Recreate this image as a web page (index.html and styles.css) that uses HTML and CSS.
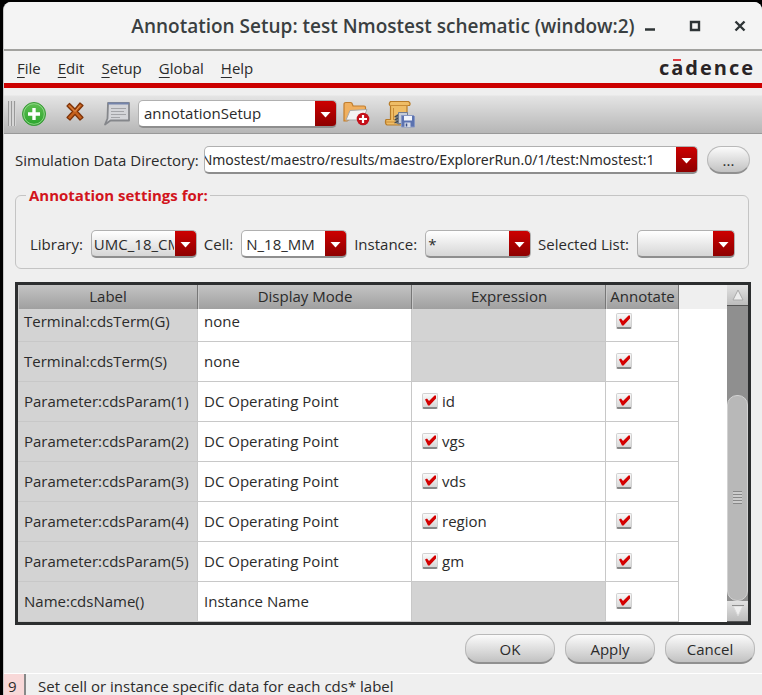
FILE: index.html
```html
<!DOCTYPE html>
<html lang="en">
<head>
<meta charset="utf-8">
<title>Annotation Setup</title>
<link rel="stylesheet" href="styles.css">
</head>
<body>
<div class="window">
  <header class="titlebar">
    <h1 class="title">Annotation Setup: test Nmostest schematic (window:2)</h1>
    <div class="window-buttons">
      <button type="button" aria-label="Minimize"><svg width="12" height="12" viewBox="0 0 12 12"><path d="M1 9.5h10" stroke="#2e3436" stroke-width="2.4"/></svg></button>
      <button type="button" aria-label="Maximize"><svg width="12" height="12" viewBox="0 0 12 12"><path d="M2 2h8v8H2z" fill="none" stroke="#2e3436" stroke-width="2.4"/></svg></button>
      <button type="button" aria-label="Close"><svg width="12" height="12" viewBox="0 0 12 12"><path d="M1.5 1.5l9 9M10.500 1.500l-9 9" stroke="#2e3436" stroke-width="2.400"/></svg></button>
    </div>
  </header>

  <nav class="menubar">
    <div class="menus">
      <button type="button"><u>F</u>ile</button>
      <button type="button"><u>E</u>dit</button>
      <button type="button"><u>S</u>etup</button>
      <button type="button"><u>G</u>lobal</button>
      <button type="button"><u>H</u>elp</button>
    </div>
    <div class="brand">c<span class="brand-a">a</span>dence</div>
  </nav>

  <div class="toolbar">
    <span class="grip"></span>
    <button type="button" class="tool" aria-label="Add">
      <svg width="26" height="28" viewBox="0 0 26 28">
        <defs><linearGradient id="green" x1="0" y1="0" x2="0" y2="1"><stop offset="0" stop-color="#5fbf52"/><stop offset="1" stop-color="#2aa52c"/></linearGradient></defs>
        <circle cx="13" cy="14" r="11.500" fill="url(#green)" stroke="#3b9a3a"/>
        <circle cx="13" cy="14" r="10.300" fill="none" stroke="#8fd488" stroke-width="1"/>
        <path d="M13 8v12M7 14h12" stroke="#fff" stroke-width="3.400"/>
      </svg>
    </button>
    <button type="button" class="tool tool-delete" aria-label="Delete">
      <svg width="20" height="28" viewBox="0 0 20 28">
        <path d="M2 6l2.500-2.500L10 9l5-6 3 2.500-5.500 6 5.500 6-3 2.500-5-5.500-5 5.500-3-2.500 5.500-6z" fill="#c4601c" stroke="#7d3208" stroke-width="1.200" stroke-linejoin="round"/>
        <path d="M4 5.500l6 6 5-6" fill="none" stroke="#e39455"/>
      </svg>
    </button>
    <button type="button" class="tool" aria-label="Comment">
      <svg width="28" height="28" viewBox="0 0 28 28">
        <path d="M5 3h21v17.500H7.500L2 24.500l2.500-6z" fill="#d4d5d9" stroke="#85878b" stroke-width="1.800" stroke-linejoin="round"/>
        <path d="M5 3.500h21" stroke="#7484ab" stroke-width="2"/>
        <path d="M8 8.500h15M8 11.500h13M8 14.500h15M8 17.500h9" stroke="#a3a4a8" stroke-width="1.200"/>
      </svg>
    </button>
    <select class="combo combo-white combo-setup" aria-label="Annotation setup"><option>annotationSetup</option></select>
    <button type="button" class="tool tool-folder" aria-label="Open folder">
      <svg width="28" height="28" viewBox="0 0 28 28">
        <path d="M2 21V4.500q0-2 2-2h4.500q1.500 0 2 2l.5 1.500h11q1.500 0 1.500 1.500V11L5 21z" fill="#f0b060" stroke="#c17d2c" stroke-width="1.200"/>
        <path d="M4 20l4-9.500 17-1-4.500 10.500z" fill="#f3f3f3" stroke="#a8a8a8"/>
        <circle cx="21" cy="19" r="6.300" fill="#c4101a"/>
        <path d="M21 15v8M17 19h8" stroke="#fff" stroke-width="2.200"/>
      </svg>
    </button>
    <button type="button" class="tool tool-script" aria-label="Save script">
      <svg width="32" height="28" viewBox="0 0 32 28">
        <path d="M6.500 1.500h18q2.500 1.500 1 4h-2.500V25H3Q.5 23.500 2 19.500h4.500V6Q4 4 6.500 1.500z" fill="#efbd66" stroke="#b87c28" stroke-width="1.200" stroke-linejoin="round"/>
        <path d="M7 5.500h17M9.500 8v12M2 22h9" fill="none" stroke="#c98c37"/>
        <path d="M14.500 13.500l-3 2v7.500l4 2z" fill="#6d7884"/>
        <path d="M10.500 17l4-2M10.500 20l4-2M10.500 23l4-2" stroke="#40464c" stroke-width="1.200"/>
        <path d="M14.500 12.500h9v11h-9z" fill="#c5ccd8" stroke="#6f7b91"/>
        <path d="M17.500 15.500h12l1 1v10.500h-13z" fill="#5c73b0" stroke="#8797c2"/>
        <path d="M20 16h8v4.500h-8z" fill="#f2f5fb"/>
        <path d="M20.500 22.500h6V27h-6z" fill="#d5dbe8"/><path d="M22.500 23.500v3" stroke="#3b4e85" stroke-width="1.500"/>
      </svg>
    </button>
  </div>

  <main class="content">
    <div class="directory">
      <label for="dir">Simulation Data Directory:</label>
      <input id="dir" class="combo combo-white combo-path" type="text" value="Nmostest/maestro/results/maestro/ExplorerRun.0/1/test:Nmostest:1">
      <button type="button" class="push push-browse" aria-label="Browse">...</button>
    </div>

    <fieldset class="group">
      <legend>Annotation settings for:</legend>
      <div class="filters">
        <label for="library">Library:</label>
        <select id="library" class="combo"><option>UMC_18_CMOS</option></select>
        <label for="cell">Cell:</label>
        <select id="cell" class="combo combo-white"><option>N_18_MM</option></select>
        <label for="instance">Instance:</label>
        <select id="instance" class="combo"><option>*</option></select>
        <label for="list">Selected List:</label>
        <select id="list" class="combo combo-list"><option></option></select>
      </div>
    </fieldset>

    <div class="grid-frame">
      <table class="grid">
        <colgroup><col class="col-label"><col class="col-mode"><col class="col-expr"><col class="col-annotate"><col></colgroup>
        <thead>
          <tr><th>Label</th><th>Display Mode</th><th>Expression</th><th>Annotate</th><td class="filler"></td></tr>
        </thead>
        <tbody>
          <tr class="row-cut"><th>Terminal:cdsTerm(G)</th><td>none</td><td class="empty"></td><td class="annotate"><input type="checkbox" checked aria-label="Annotate cdsTerm(G)"></td><td class="filler"></td></tr>
          <tr><th>Terminal:cdsTerm(S)</th><td>none</td><td class="empty"></td><td class="annotate"><input type="checkbox" checked aria-label="Annotate cdsTerm(S)"></td><td class="filler"></td></tr>
          <tr><th>Parameter:cdsParam(1)</th><td>DC Operating Point</td><td class="expr"><label><input type="checkbox" checked>id</label></td><td class="annotate"><input type="checkbox" checked aria-label="Annotate cdsParam(1)"></td><td class="filler"></td></tr>
          <tr><th>Parameter:cdsParam(2)</th><td>DC Operating Point</td><td class="expr"><label><input type="checkbox" checked>vgs</label></td><td class="annotate"><input type="checkbox" checked aria-label="Annotate cdsParam(2)"></td><td class="filler"></td></tr>
          <tr><th>Parameter:cdsParam(3)</th><td>DC Operating Point</td><td class="expr"><label><input type="checkbox" checked>vds</label></td><td class="annotate"><input type="checkbox" checked aria-label="Annotate cdsParam(3)"></td><td class="filler"></td></tr>
          <tr><th>Parameter:cdsParam(4)</th><td>DC Operating Point</td><td class="expr"><label><input type="checkbox" checked>region</label></td><td class="annotate"><input type="checkbox" checked aria-label="Annotate cdsParam(4)"></td><td class="filler"></td></tr>
          <tr><th>Parameter:cdsParam(5)</th><td>DC Operating Point</td><td class="expr"><label><input type="checkbox" checked>gm</label></td><td class="annotate"><input type="checkbox" checked aria-label="Annotate cdsParam(5)"></td><td class="filler"></td></tr>
          <tr><th>Name:cdsName()</th><td>Instance Name</td><td class="empty"></td><td class="annotate"><input type="checkbox" checked aria-label="Annotate cdsName()"></td><td class="filler"></td></tr>
        </tbody>
      </table>
      <div class="scrollbar">
        <button type="button" class="step" aria-label="Scroll up"><svg width="14" height="14" viewBox="0 0 14 14"><path d="M7 2l5 10H2z" fill="#ededed" stroke="#aaa"/></svg></button>
        <div class="track"><div class="thumb"><span class="thumb-grip"></span></div></div>
        <button type="button" class="step" aria-label="Scroll down"><svg width="14" height="14" viewBox="0 0 14 14"><path d="M2 2h10L7 12z" fill="#efefef" stroke="#d8d8d8"/><path d="M1 1.500h12" stroke="#8d8d8d"/></svg></button>
      </div>
    </div>

    <div class="actions">
      <button type="button" class="push">OK</button>
      <button type="button" class="push">Apply</button>
      <button type="button" class="push">Cancel</button>
    </div>
  </main>

  <footer class="status">
    <span class="status-count">9</span>
    <span class="status-text">Set cell or instance specific data for each cds* label</span>
  </footer>
</div>
</body>
</html>
```
FILE: styles.css
```css
* { box-sizing: border-box; }

body {
  margin: 0;
  background: #000;
  font: 15px/18px "Open Sans", "Noto Sans", sans-serif;
  color: #2b2b2b;
}

button, input, select { font: inherit; color: inherit; margin: 0; }
button { padding: 0; border: 0; background: none; }

.window {
  display: flex;
  flex-direction: column;
  min-height: calc(100vh - 2px);
  margin: 2px 0 0 3px;
  background: #efefef;
  border-left: 1px solid #c8c8c8;
  border-radius: 8px 8px 0 0;
  overflow: hidden;
}

/* Title bar */
.titlebar {
  display: grid;
  grid-template-columns: 1fr auto 1fr;
  align-items: center;
  height: 49px;
  background: #f4f4f4;
  border-bottom: 2px solid #a2a29f;
}
.title {
  grid-column: 2;
  margin: 0;
  font: 600 19px/24px "Open Sans", sans-serif;
  color: #3a3f41;
  white-space: nowrap;
}
.window-buttons { display: flex; justify-content: flex-end; gap: 21px; padding-right: 10px; }
.window-buttons button { width: 24px; height: 24px; }
.window-buttons svg { display: block; margin: auto; }

/* Menu bar */
.menubar {
  display: flex;
  justify-content: space-between;
  align-items: center;
  height: 37px;
  padding: 2px 7px 0 13px;
  background: #f2f2f2;
  border-bottom: 5px solid #cc0000;
}
.menus { display: flex; gap: 17px; }
.menus u { text-underline-offset: 3px; }
.brand { font: 700 20px/24px "Open Sans", sans-serif; letter-spacing: 2px; color: #2a2426; }
.brand-a { position: relative; }
.brand-a::before {
  content: "";
  position: absolute;
  top: 5px;
  left: 2px;
  width: 8px;
  height: 2px;
  background: #e03a40;
}

/* Tool bar */
.toolbar {
  display: flex;
  align-items: center;
  height: 46px;
  padding: 6px 4px 0;
  background: linear-gradient(#efefef 7px, #e4e4e4 8px, #b6b6b6);
  border-bottom: 1px solid #999;
}
.grip {
  width: 8px;
  height: 25px;
  margin-right: 5px;
  background: repeating-linear-gradient(90deg, #999 0 1px, #d6d6d6 1px 3px);
}
.tool svg { display: block; }
.tool-delete { margin: 0 18px; }
.tool-folder { margin: 0 14px 0 5px; }

/* Drop-downs and editable boxes with the red arrow block */
.combo {
  appearance: none;
  height: 28px;
  min-width: 0;
  padding: 0 22px 0 2px;
  border: 1px solid #b0b0b0;
  border-bottom: 2px solid #8e8e8e;
  border-radius: 5px;
  background:
    url("data:image/svg+xml,%3Csvg xmlns='http://www.w3.org/2000/svg' width='21' height='28'%3E%3Cpath d='M5.500 11h10l-5 5.500z' fill='%23fff'/%3E%3C/svg%3E") right top no-repeat,
    linear-gradient(#cc0000, #8e0000) right / 21px 100% no-repeat,
    linear-gradient(#fff, #d6d6d6);
}
.combo-white {
  background:
    url("data:image/svg+xml,%3Csvg xmlns='http://www.w3.org/2000/svg' width='21' height='28'%3E%3Cpath d='M5.500 11h10l-5 5.500z' fill='%23fff'/%3E%3C/svg%3E") right top no-repeat,
    linear-gradient(#cc0000, #8e0000) right / 21px 100% no-repeat,
    #fff;
}
.combo-setup { width: 199px; margin-left: 7px; padding-left: 5px; }

/* Rounded push buttons */
.push {
  width: 90px;
  height: 30px;
  border: 1px solid #b9b9b9;
  border-bottom: 2px solid #909090;
  border-radius: 14px;
  background: linear-gradient(#fbfbfb, #c2c2c2);
}
.push-browse { flex: none; width: 43px; height: 28px; margin-left: 4px; }

/* Main area */
.content { flex: 1; padding: 12px 11px 0; }

.directory { display: flex; align-items: center; gap: 5px; padding-right: 1px; }
.combo-path { flex: 1; padding: 0 22px 0 0; font-family: "Noto Sans", sans-serif; font-size: 14px; text-indent: -3px; }

.group {
  min-width: 0;
  margin: 12px 2px 0 0;
  padding: 26px 13px 10px 14px;
  border: 1px solid #c4c4c4;
  border-radius: 6px;
}
.group legend { margin-left: -4px; padding: 0 2px 0 3px; font-weight: 700; color: #d2141c; }
.filters { display: flex; align-items: center; gap: 8px; }
.filters label { flex: none; }
.filters .combo { flex: 1 1 106px; margin-right: -1px; }
.filters .combo-list { flex-basis: 98px; margin-right: 0; }
.filters .combo-white { padding-left: 4px; }

/* Label table */
.grid-frame {
  display: flex;
  margin-top: 13px;
  border: 3px solid #2c2e2f;
}
.grid { flex: 1; min-width: 0; border-collapse: separate; border-spacing: 0; table-layout: fixed; background: #fff; }
.col-label { width: 180px; }
.col-mode { width: 214px; }
.col-expr { width: 194px; }
.col-annotate { width: 73px; }
.grid th, .grid td { padding: 0 6px 2px; font-weight: 400; text-align: left; white-space: nowrap; }
.grid thead th {
  height: 24px;
  padding: 0 0 2px;
  text-align: center;
  background: linear-gradient(#c4c4c4, #a0a0a0);
  border-right: 1px solid #777;
  border-left: 1px solid #c8c8c8;
}
.grid thead .filler { background: #efefef; }
.grid tbody tr { height: 40px; }
.grid tbody .row-cut { height: 33px; }
.grid tbody .row-cut > * { padding-bottom: 9px; }
.grid tbody th, .grid tbody td { border-right: 1px solid #c8c8c8; border-bottom: 1px solid #c8c8c8; }
.grid tbody th, .grid .empty { background: #d3d3d3; }
.grid tbody .filler { border: 0; }
.grid td.expr { padding-left: 10px; }
.expr label { display: flex; align-items: center; gap: 4px; }
.grid td.annotate { padding-left: 10px; }
.grid input {
  appearance: none;
  display: block;
  width: 16px;
  height: 16px;
  border: 1px solid #d2d2d2;
  border-bottom: 2px solid #888;
  border-radius: 2px;
  background: linear-gradient(#fafafa, #d6d6d6);
}
.grid input:checked {
  background:
    url("data:image/svg+xml,%3Csvg xmlns='http://www.w3.org/2000/svg' width='14' height='13'%3E%3Cpath d='M2 5.500l2-1 2 2.500L11.500 1.500h1.500v3L6.500 11.500H5z' fill='%23d40000'/%3E%3C/svg%3E") center no-repeat,
    linear-gradient(#fafafa, #d6d6d6);
}

/* Scroll bar */
.scrollbar { display: flex; flex-direction: column; flex: none; width: 21px; background: #8f8f8f; }
.step {
  height: 21px;
  background: linear-gradient(#e2e2e2, #bcbcbc);
  border-bottom: 1px solid #555;
}
.step svg { display: block; margin: auto; }
.track { display: flex; flex: 1; flex-direction: column; justify-content: flex-end; }
.thumb {
  display: flex;
  align-items: center;
  justify-content: center;
  height: 70%;
  border: 1px solid #d2d2d2;
  border-radius: 10px;
  background: #b8b8b8;
}
.thumb-grip {
  width: 9px;
  height: 13px;
  background: repeating-linear-gradient(#888 0 1px, #ccc 1px 3px);
}

.actions { display: flex; justify-content: flex-end; gap: 10px; padding: 9px 0 8px; margin-right: -4px; }

/* Status bar */
.status { display: flex; height: 22px; border-top: 1px solid #fff; line-height: 14px; }
.status-count {
  width: 22px;
  padding: 5px 0 0 4px;
  background: #f8d8d8;
  border-right: 2px solid #888;
}
.status-text { padding: 5px 0 0 12px; white-space: nowrap; }
```
